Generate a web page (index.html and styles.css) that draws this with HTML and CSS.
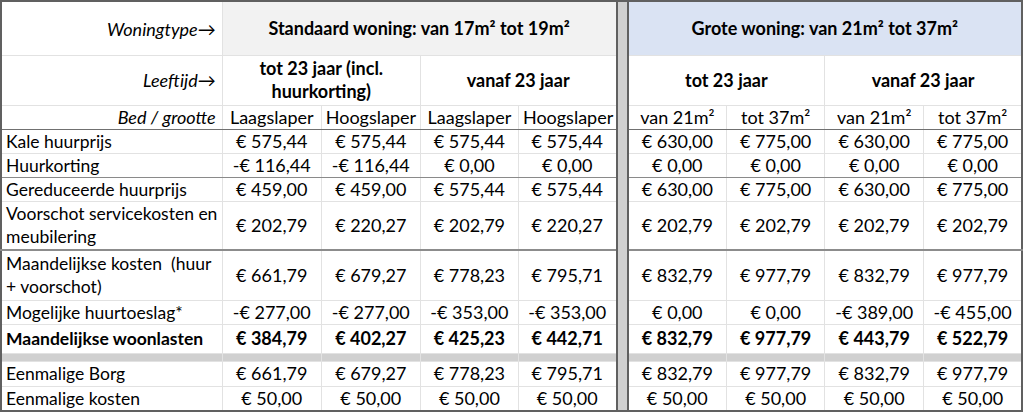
FILE: index.html
```html
<!DOCTYPE html>
<html lang="nl">
<head>
<meta charset="utf-8">
<title>Woonlasten</title>
<link rel="stylesheet" href="styles.css">
</head>
<body>
<table class="sheet">
  <colgroup>
    <col class="c-lbl">
    <col class="c-a"><col class="c-b"><col class="c-c"><col class="c-d">
    <col class="c-gap">
    <col class="c-e"><col class="c-f"><col class="c-g"><col class="c-h">
  </colgroup>
  <tbody>
    <tr class="r-type">
      <td class="hdr">Woningtype&#8594;</td>
      <td colspan="4" class="group std">Standaard woning: van 17m² tot 19m²</td>
      <td rowspan="13" class="gap"></td>
      <td colspan="4" class="group big">Grote woning: van 21m² tot 37m²</td>
    </tr>
    <tr class="r-age">
      <td class="hdr">Leeftijd&#8594;</td>
      <td colspan="2" class="age">tot 23 jaar (incl.<br>huurkorting)</td>
      <td colspan="2" class="age mid">vanaf 23 jaar</td>
      <td colspan="2" class="age">tot 23 jaar</td>
      <td colspan="2" class="age mid">vanaf 23 jaar</td>
    </tr>
    <tr class="r-bed">
      <td class="hdr">Bed / grootte</td>
      <td>Laagslaper</td><td>Hoogslaper</td><td class="mid">Laagslaper</td><td>Hoogslaper</td>
      <td>van 21m²</td><td>tot 37m²</td><td class="mid">van 21m²</td><td>tot 37m²</td>
    </tr>
    <tr class="r1">
      <td class="lbl">Kale huurprijs</td>
      <td>€ 575,44</td><td class="dk">€ 575,44</td><td class="mid">€ 575,44</td><td class="dk">€ 575,44</td>
      <td>€ 630,00</td><td>€ 775,00</td><td class="mid">€ 630,00</td><td>€ 775,00</td>
    </tr>
    <tr class="r1 grp-end">
      <td class="lbl">Huurkorting</td>
      <td>-€ 116,44</td><td class="dk">-€ 116,44</td><td class="mid">€ 0,00</td><td class="dk">€ 0,00</td>
      <td>€ 0,00</td><td>€ 0,00</td><td class="mid">€ 0,00</td><td>€ 0,00</td>
    </tr>
    <tr class="r1">
      <td class="lbl">Gereduceerde huurprijs</td>
      <td>€ 459,00</td><td>€ 459,00</td><td class="mid">€ 575,44</td><td>€ 575,44</td>
      <td>€ 630,00</td><td>€ 775,00</td><td class="mid">€ 630,00</td><td>€ 775,00</td>
    </tr>
    <tr class="r2 grp-end2">
      <td class="lbl">Voorschot servicekosten en<br>meubilering</td>
      <td>€ 202,79</td><td>€ 220,27</td><td class="mid">€ 202,79</td><td>€ 220,27</td>
      <td>€ 202,79</td><td>€ 202,79</td><td class="mid">€ 202,79</td><td>€ 202,79</td>
    </tr>
    <tr class="r2b">
      <td class="lbl">Maandelijkse kosten &nbsp;(huur<br>+ voorschot)</td>
      <td>€ 661,79</td><td>€ 679,27</td><td class="mid">€ 778,23</td><td>€ 795,71</td>
      <td>€ 832,79</td><td>€ 977,79</td><td class="mid">€ 832,79</td><td>€ 977,79</td>
    </tr>
    <tr class="r1">
      <td class="lbl">Mogelijke huurtoeslag*</td>
      <td>-€ 277,00</td><td>-€ 277,00</td><td class="mid">-€ 353,00</td><td>-€ 353,00</td>
      <td>€ 0,00</td><td>€ 0,00</td><td class="mid">-€ 389,00</td><td>-€ 455,00</td>
    </tr>
    <tr class="r-total">
      <td class="lbl">Maandelijkse woonlasten</td>
      <td>€ 384,79</td><td>€ 402,27</td><td class="mid">€ 425,23</td><td>€ 442,71</td>
      <td>€ 832,79</td><td>€ 977,79</td><td class="mid">€ 443,79</td><td>€ 522,79</td>
    </tr>
    <tr class="r-band">
      <td></td><td></td><td></td><td class="mid"></td><td></td>
      <td></td><td></td><td class="mid"></td><td></td>
    </tr>
    <tr class="r1b">
      <td class="lbl">Eenmalige Borg</td>
      <td>€ 661,79</td><td>€ 679,27</td><td class="mid">€ 778,23</td><td>€ 795,71</td>
      <td>€ 832,79</td><td>€ 977,79</td><td class="mid">€ 832,79</td><td>€ 977,79</td>
    </tr>
    <tr class="r1 last">
      <td class="lbl">Eenmalige kosten</td>
      <td>€ 50,00</td><td>€ 50,00</td><td class="mid">€ 50,00</td><td>€ 50,00</td>
      <td>€ 50,00</td><td>€ 50,00</td><td class="mid">€ 50,00</td><td>€ 50,00</td>
    </tr>
  </tbody>
</table>
</body>
</html>
```
FILE: styles.css
```css
html, body {
  margin: 0;
  padding: 0;
  background: #ffffff;
}

.sheet {
  border-collapse: collapse;
  table-layout: fixed;
  width: 1023px;
  font-family: Lato, "Open Sans", sans-serif;
  font-size: 18px;
  color: #000;
  border: 2px solid #606060;
}

.c-lbl { width: 221px; }
.c-a { width: 99px; }
.c-b { width: 99px; }
.c-c { width: 98px; }
.c-d { width: 98px; }
.c-gap { width: 11px; }
.c-e { width: 99px; }
.c-f { width: 98px; }
.c-g { width: 99px; }
.c-h { width: 98px; }

.sheet td {
  padding: 0 4px;
  border: 1px solid #e2e2e2;
  text-align: center;
  vertical-align: middle;
  white-space: nowrap;
  line-height: 23px;
  overflow: hidden;
}

.sheet td.lbl {
  text-align: left;
  font-size: 17.5px;
}

.sheet td.hdr {
  text-align: right;
  font-style: italic;
  padding-right: 6px;
}

.r-type td.hdr { padding-top: 2px; }

.sheet td.mid { border-left: 1px solid #8c8c8c; }
.sheet td.dk { border-left: 1px solid #606060; }

.sheet td.gap {
  background: #d0d0d0;
  border-left: 2px solid #606060;
  border-right: 2px solid #606060;
  padding: 0;
}

.r-type { height: 54px; }
.r-age { height: 50px; }
.r-bed { height: 24px; }
.r1 { height: 24px; }
.r1b { height: 25px; }
.r2 { height: 49px; }
.r2b { height: 50px; }
.r-total { height: 29px; }
.r-band { height: 8px; }

.group {
  font-weight: bold;
  padding-top: 2px;
}
.group.std { background: #f2f2f2; }
.group.big { background: #dae3f3; }

.age { font-weight: bold; }

.r-bed td { border-bottom: 1px solid #707070; }
.grp-end td { border-bottom: 1px solid #8a8a8a; }
.grp-end2 td { border-bottom: 2px solid #8c8c8c; }

.r-total td { font-weight: bold; }

.r-band td {
  background: #d0d0d0;
  padding: 0;
  line-height: 0;
  border-top: 1px solid #e2e2e2;
}
```
